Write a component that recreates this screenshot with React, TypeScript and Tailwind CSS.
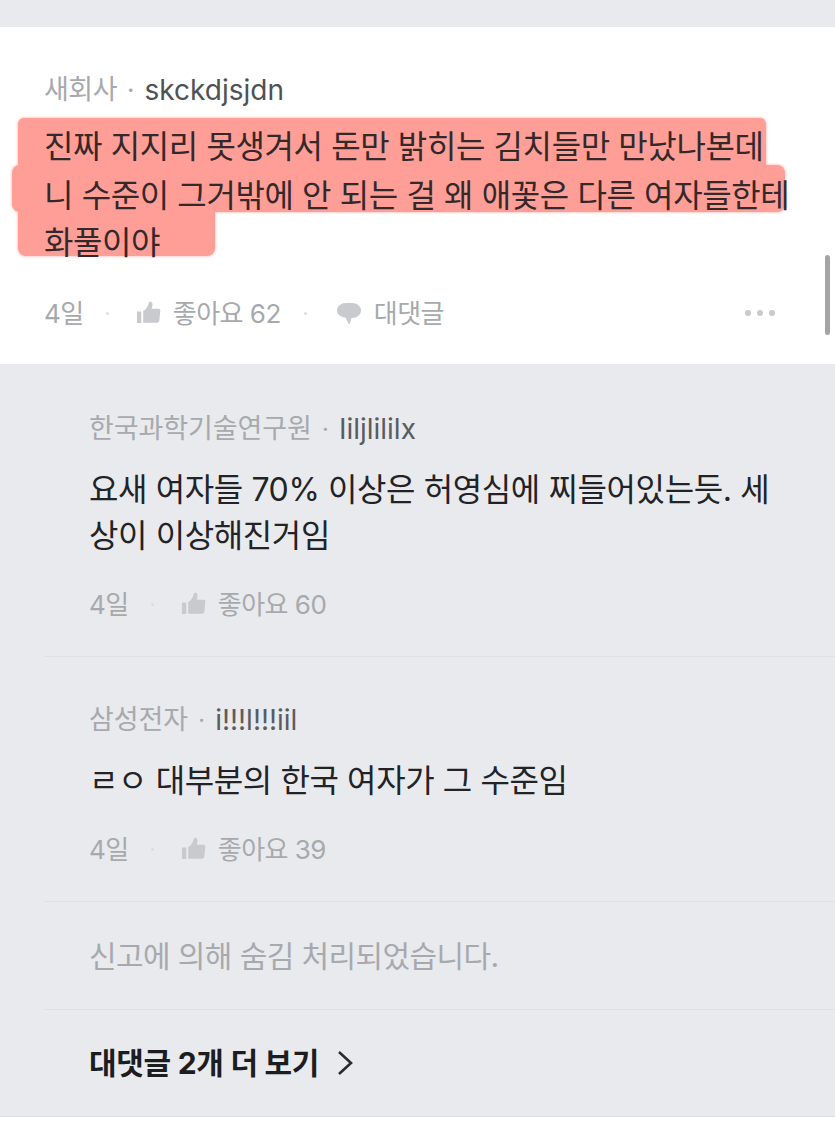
const font = { fontFamily: '"Inter","Noto Sans CJK KR",sans-serif' };

function ThumbIcon({ size = 25, color = "#c9cacd" }: { size?: number; color?: string }) {
  return (
    <svg width={size} height={size} viewBox="0 0 26 26" className="shrink-0">
      <path fill={color} d="M1 11h4.500v12H1zM7.500 10.500c2.500-1.500 4.500-4.500 5.500-7.500.5-1.500 1-2.300 2.200-2.100 1.800.3 2.300 2.300 1.800 4.300-.2 1-.4 1.800-.7 2.800H23.500c1.200 0 1.900 1 1.800 2.200l-1 10c-.2 1.400-1.100 2.300-2.500 2.300H7.500z" />
    </svg>
  );
}

function BubbleIcon() {
  return (
    <svg width="26" height="26" viewBox="0 0 26 26" className="shrink-0">
      <path fill="#c9cacd" d="M10 3h6c5 0 9 3.200 9 7.500S21 18 16 18h-.5l-1.500 5.500c-.2.700-1 .8-1.400.2L9.500 17.700C4.600 17 1 14.300 1 10.500 1 6.200 5 3 10 3z" />
    </svg>
  );
}

function Dot({ className }: { className: string }) {
  return <span className={`h-[3px] w-[3px] shrink-0 rounded-full bg-[#dcdde0] ${className}`} />;
}

function Meta({ likes, reply }: { likes: number; reply?: boolean }) {
  return (
    <div className="flex h-[32px] items-center text-[26px] tracking-[-0.5px] text-[#a7a9ad]">
      <span>4일</span>
      <Dot className="ml-[22px] mr-[27px]" />
      <span className="flex items-center gap-[12px]">
        <ThumbIcon />
        <span>좋아요 {likes}</span>
      </span>
      {reply && (
        <>
          <Dot className="ml-[23px] mr-[29px]" />
          <span className="flex items-center gap-[12px]">
            <BubbleIcon />
            <span>대댓글</span>
          </span>
        </>
      )}
    </div>
  );
}

function Reply({
  company,
  nick,
  lines,
  likes,
  className,
  bodyClass,
  metaClass,
}: {
  company: string;
  nick: string;
  lines: string[];
  likes: number;
  className: string;
  bodyClass: string;
  metaClass: string;
}) {
  return (
    <div className={className}>
      <div className="flex items-center leading-[32px]">
        <span className="text-[27px] tracking-[-0.1px] text-[#a7a9ad]">{company}</span>
        <span className="mx-[10px] text-[25px] text-[#a7a9ad]">·</span>
        <span className="text-[28px] text-[#5a5c60]">{nick}</span>
      </div>
      <div className={`text-[32px] leading-[46px] tracking-[-0.4px] text-[#222326] ${bodyClass}`}>
        {lines.map((l) => (
          <div key={l} className="whitespace-nowrap">
            {l}
          </div>
        ))}
      </div>
      <div className={metaClass}>
        <Meta likes={likes} />
      </div>
    </div>
  );
}

export default function App() {
  return (
    <div style={font} className="flex h-[1136px] w-[835px] flex-col overflow-hidden bg-white">
      <div className="h-[27px] shrink-0 bg-[#e9eaee]" />

      <section className="relative h-[337px] shrink-0 bg-white pt-[47px]">
        <div className="flex items-center pl-[44px] leading-[32px]">
          <span className="text-[27px] tracking-[-0.5px] text-[#a7a9ad]">새회사</span>
          <span className="mx-[10px] text-[26px] text-[#a7a9ad]">·</span>
          <span className="text-[28px] text-[#4f5155]">skckdjsjdn</span>
        </div>

        <div className="mt-[12px] text-[32px] leading-[46px] tracking-[-0.4px] text-[#33282a]">
          <div className="ml-[18px] h-[47px] w-[748px] whitespace-nowrap rounded-t-[6px] bg-[#ff9e97] pl-[26px] pt-[6px] shadow-[0_0_3px_#ff9e97]">
            진짜 지지리 못생겨서 돈만 밝히는 김치들만 만났나본데
          </div>
          <div className="relative ml-[12px] h-[47px] w-[773px] whitespace-nowrap rounded-[8px] bg-[#ff9e97] pl-[32px] pt-[8px] shadow-[0_0_3px_#ff9e97]">
            니 수준이 그거밖에 안 되는 걸 왜 애꽃은 다른 여자들한테
          </div>
          <div className="ml-[18px] h-[44px] w-[197px] whitespace-nowrap rounded-b-[8px] bg-[#ff9e97] pl-[26px] pt-[8px] shadow-[0_0_3px_#ff9e97]">
            화풀이야
          </div>
        </div>

        <div className="mt-[41px] flex items-center justify-between pl-[44px] pr-[60px]">
          <Meta likes={62} reply />
          <span className="flex gap-[6px]">
            <span className="h-[6px] w-[6px] rounded-full bg-[#c9cacd]" />
            <span className="h-[6px] w-[6px] rounded-full bg-[#c9cacd]" />
            <span className="h-[6px] w-[6px] rounded-full bg-[#c9cacd]" />
          </span>
        </div>

        <div className="absolute right-[5px] top-[228px] h-[80px] w-[5px] rounded-full bg-[#a3a4a7]" />
      </section>

      <section className="h-[752px] shrink-0 bg-[#e9eaee] pl-[44px]">
        <Reply
          className="h-[293px] border-b border-[#dfe0e4] pl-[45px] pt-[49px]"
          bodyClass="mt-[22px]"
          metaClass="mt-[29px]"
          company="한국과학기술연구원"
          nick="Iiljlililx"
          lines={["요새 여자들 70% 이상은 허영심에 찌들어있는듯. 세", "상이 이상해진거임"]}
          likes={60}
        />
        <Reply
          className="h-[245px] border-b border-[#dfe0e4] pl-[45px] pt-[47px]"
          bodyClass="mt-[22px]"
          metaClass="mt-[29px]"
          company="삼성전자"
          nick="i!!!l!!!iil"
          lines={["ㄹㅇ 대부분의 한국 여자가 그 수준임"]}
          likes={39}
        />
        <div className="flex h-[108px] items-center border-b border-[#dfe0e4] pl-[45px] pt-[2px] text-[30px] tracking-[-0.6px] text-[#a7a9ad]">
          신고에 의해 숨김 처리되었습니다.
        </div>
        <div className="flex h-[106px] items-center pl-[45px] text-[30px] font-bold tracking-[-0.3px] text-[#1c1d20]">
          <span>대댓글 2개 더 보기</span>
          <svg width="18" height="28" viewBox="0 0 18 28" className="ml-[17px]" fill="none" stroke="#2a2b2e" strokeWidth="2.600">
            <path d="M3 3l12 11L3 25" />
          </svg>
        </div>
      </section>

      <div className="flex-1 border-t border-[#dcdde0] bg-white" />
    </div>
  );
}
